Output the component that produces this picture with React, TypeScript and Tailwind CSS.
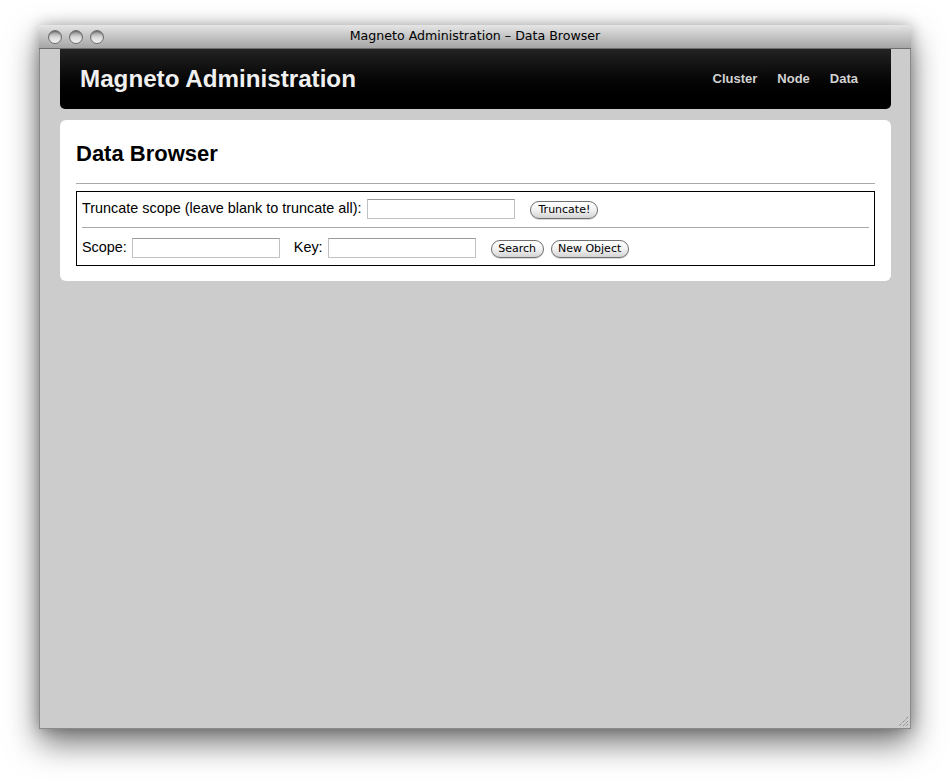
const sans = { fontFamily: "'Liberation Sans', Arial, sans-serif" };
const ui = { fontFamily: "'DejaVu Sans', 'Liberation Sans', sans-serif" };

function Light() {
  return (
    <span className="w-[14px] h-[14px] rounded-full border border-[#6e6e6e] bg-gradient-to-b from-[#8c8c8c] via-[#d8d8d8] to-[#f4f4f4] shadow-[inset_0_1px_1px_rgba(0,0,0,0.3)]" />
  );
}

function Field({ w = "w-[148px]" }: { w?: string }) {
  return (
    <input
      type="text"
      className={`${w} h-[20px] border border-[#c2c2c2] border-t-[#9a9a9a] bg-white outline-none`}
    />
  );
}

function Pill({ label, w }: { label: string; w: string }) {
  return (
    <button
      className={`${w} h-[18px] rounded-full border border-[#707070] bg-gradient-to-b from-white via-[#f2f2f2] to-[#d4d4d4] text-[11px] leading-[16px] text-black shadow-[0_1px_0_rgba(0,0,0,0.15)]`}
      style={ui}
    >
      {label}
    </button>
  );
}

export default function App() {
  return (
    <div className="w-[951px] h-[784px] bg-white overflow-hidden pt-[25px] pl-[39px]">
      <div className="w-[872px] h-[704px] flex flex-col rounded-t-[5px] shadow-[0_14px_32px_rgba(0,0,0,0.55),0_0_14px_rgba(0,0,0,0.25)] relative">
        {/* Title bar */}
        <div className="h-[24px] shrink-0 rounded-t-[5px] bg-gradient-to-b from-[#e6e6e6] via-[#c4c4c4] to-[#a6a6a6] border-b border-[#6f6f6f] flex items-center relative">
          <div className="flex gap-[7px] pl-[9px]">
            <Light />
            <Light />
            <Light />
          </div>
          <div className="absolute inset-0 flex items-center justify-center text-[12.6px] text-black" style={ui}>
            Magneto Administration – Data Browser
          </div>
        </div>

        {/* Content */}
        <div className="flex-1 bg-[#cccccc] border-x border-b border-[#8a8a8a] pl-[20px] pr-[19px] relative">
          <div className="h-[60px] rounded-b-[5px] bg-gradient-to-b from-[#232323] to-[#000000] flex items-center justify-between pl-[20px] pr-[33px]">
            <span className="text-[24.2px] font-bold text-[#f0f0f0]" style={sans}>
              Magneto Administration
            </span>
            <nav className="flex gap-[20px] text-[13px] font-bold text-[#d2d2d2]" style={sans}>
              <span>Cluster</span>
              <span>Node</span>
              <span>Data</span>
            </nav>
          </div>

          <div className="mt-[11px] bg-white rounded-[6px] px-[16px] pt-[21px] pb-[15px]" style={sans}>
            <h1 className="text-[22px] font-bold text-black leading-[26px]">Data Browser</h1>
            <div className="mt-[16px] h-[1px] bg-[#aaaaaa]" />
            <div className="mt-[7px] border border-black px-[5px] pt-[7px] pb-[7px] text-[14.4px] text-black">
              <div className="flex items-center h-[20px]">
                <span>Truncate scope (leave blank to truncate all):</span>
                <span className="ml-[6px]">
                  <Field />
                </span>
                <span className="ml-[15px]">
                  <Pill label="Truncate!" w="w-[68px]" />
                </span>
              </div>
              <div className="mt-[8px] h-[1px] bg-[#aaaaaa]" />
              <div className="mt-[10px] flex items-center h-[20px]">
                <span>Scope:</span>
                <span className="ml-[5px]">
                  <Field />
                </span>
                <span className="ml-[14px]">Key:</span>
                <span className="ml-[5px]">
                  <Field />
                </span>
                <span className="ml-[15px]">
                  <Pill label="Search" w="w-[53px]" />
                </span>
                <span className="ml-[7px]">
                  <Pill label="New Object" w="w-[78px]" />
                </span>
              </div>
            </div>
          </div>

          {/* resize grip */}
          <svg className="absolute right-[1px] bottom-[1px]" width="12" height="12" viewBox="0 0 12 12">
            <path d="M11 2 L2 11 M11 6 L6 11 M11 9 L9 11" stroke="#7a7a7a" strokeWidth="1" strokeDasharray="1 1" />
          </svg>
        </div>
      </div>
    </div>
  );
}
